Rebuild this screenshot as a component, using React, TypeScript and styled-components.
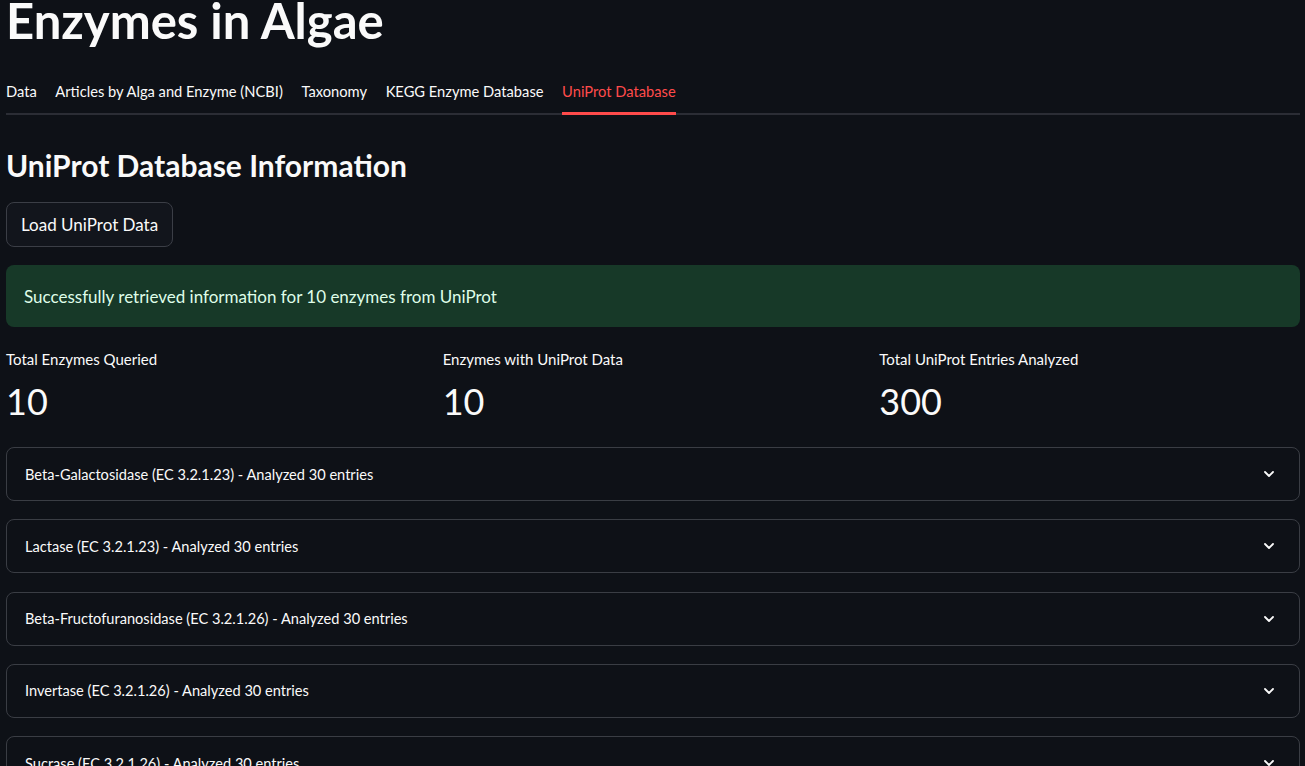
import React from 'react';
import styled, { createGlobalStyle } from 'styled-components';
import { ChevronDown } from 'lucide-react';

const GlobalStyle = createGlobalStyle`
  html, body {
    margin: 0;
    padding: 0;
    background: #0e1117;
    color: #fafafa;
    font-family: Lato, "Noto Sans", sans-serif;
    overflow: hidden;
  }
  * { box-sizing: border-box; }
`;

const Page = styled.div`
  padding: 0 5px 0 6px;
  height: 766px;
  overflow: hidden;
`;

const Title = styled.h1`
  font-size: 49px;
  font-weight: 700;
  line-height: 52px;
  margin: -6px 0 0;
`;

const TabBar = styled.div`
  display: flex;
  gap: 18.6px;
  margin-top: 35px;
  border-bottom: 2px solid #2b2d35;
`;

const Tab = styled.div<{ $active?: boolean }>`
  font-size: 14.7px;
  line-height: 20px;
  padding-bottom: 11px;
  margin-bottom: -2px;
  color: ${p => (p.$active ? '#ff4b4b' : '#fafafa')};
  border-bottom: 3px solid ${p => (p.$active ? '#ff4b4b' : 'transparent')};
  white-space: nowrap;
`;

const Heading = styled.h2`
  font-size: 30px;
  font-weight: 700;
  line-height: 40px;
  margin: 30px 0 0;
`;

const Button = styled.button`
  margin-top: 17px;
  height: 45px;
  padding: 0 14px;
  font-family: inherit;
  font-size: 17px;
  color: #fafafa;
  background: #12151c;
  border: 1px solid #3b3e46;
  border-radius: 8px;
`;

const Alert = styled.div`
  margin-top: 18px;
  height: 62px;
  display: flex;
  align-items: center;
  padding: 0 18px;
  background: #173928;
  color: #dffde9;
  border-radius: 8px;
  font-size: 17px;
`;

const Metrics = styled.div`
  display: grid;
  grid-template-columns: repeat(3, 1fr);
  gap: 16px;
  margin-top: 22px;
`;

const Metric = styled.div`
  display: flex;
  flex-direction: column;
`;

const MetricLabel = styled.div`
  font-size: 15px;
  line-height: 20px;
`;

const MetricValue = styled.div`
  font-size: 36px;
  line-height: 48px;
  margin-top: 8px;
`;

const ExpanderList = styled.div`
  display: flex;
  flex-direction: column;
  gap: 18.3px;
  margin-top: 22px;
`;

const Expander = styled.div`
  height: 54px;
  flex-shrink: 0;
  display: flex;
  align-items: center;
  justify-content: space-between;
  padding: 0 22px 0 18px;
  border: 1px solid #3a3d44;
  border-radius: 8px;
  font-size: 14.6px;
`;

const tabs = [
  'Data',
  'Articles by Alga and Enzyme (NCBI)',
  'Taxonomy',
  'KEGG Enzyme Database',
  'UniProt Database',
];

const metrics = [
  { label: 'Total Enzymes Queried', value: '10' },
  { label: 'Enzymes with UniProt Data', value: '10' },
  { label: 'Total UniProt Entries Analyzed', value: '300' },
];

const enzymes = [
  'Beta-Galactosidase (EC 3.2.1.23) - Analyzed 30 entries',
  'Lactase (EC 3.2.1.23) - Analyzed 30 entries',
  'Beta-Fructofuranosidase (EC 3.2.1.26) - Analyzed 30 entries',
  'Invertase (EC 3.2.1.26) - Analyzed 30 entries',
  'Sucrase (EC 3.2.1.26) - Analyzed 30 entries',
];

const App: React.FC = () => (
  <>
    <GlobalStyle />
    <Page>
      <Title>Enzymes in Algae</Title>
      <TabBar>
        {tabs.map(t => (
          <Tab key={t} $active={t === 'UniProt Database'}>{t}</Tab>
        ))}
      </TabBar>
      <Heading>UniProt Database Information</Heading>
      <Button>Load UniProt Data</Button>
      <Alert>Successfully retrieved information for 10 enzymes from UniProt</Alert>
      <Metrics>
        {metrics.map(m => (
          <Metric key={m.label}>
            <MetricLabel>{m.label}</MetricLabel>
            <MetricValue>{m.value}</MetricValue>
          </Metric>
        ))}
      </Metrics>
      <ExpanderList>
        {enzymes.map(e => (
          <Expander key={e}>
            <span>{e}</span>
            <ChevronDown size={16} strokeWidth={2.75} />
          </Expander>
        ))}
      </ExpanderList>
    </Page>
  </>
);

export default App;
